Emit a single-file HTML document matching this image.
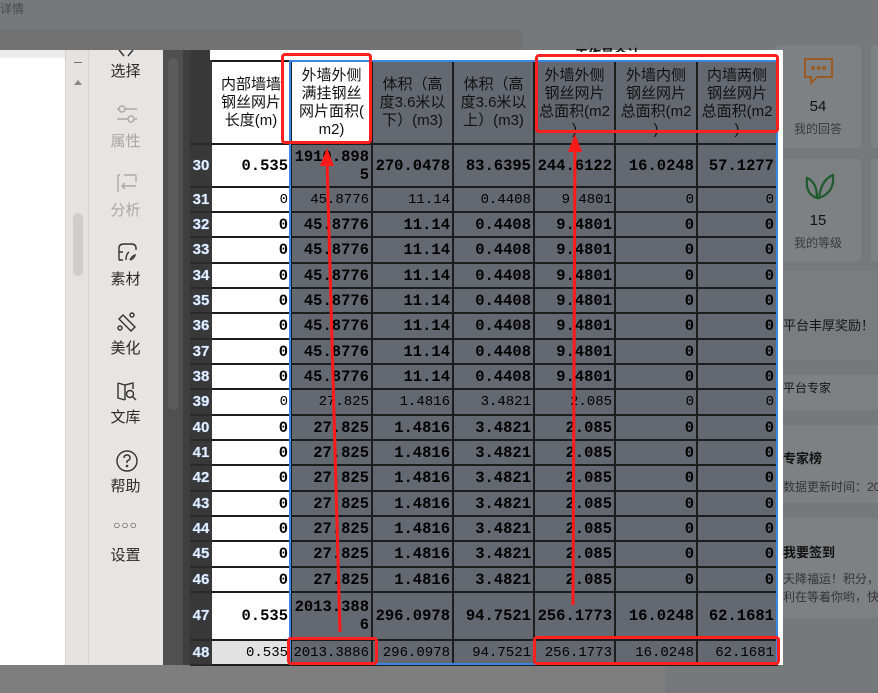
<!DOCTYPE html>
<html><head><meta charset="utf-8"><style>
*{margin:0;padding:0;box-sizing:border-box}
body{width:878px;height:693px;overflow:hidden;background:#7e7e7e;position:relative;font-family:"Liberation Sans","Noto Sans CJK SC",sans-serif}
.a{position:absolute;white-space:nowrap}
.sb{position:absolute;left:88px;width:75px;text-align:center;font-size:15px;color:#2a2a2a}
.sb.d{color:#a9a7a5}
table{border-collapse:collapse;table-layout:fixed;position:absolute;left:190px;top:60px}
td{border:2px solid #1d1d1d;background:#646870;text-align:right;padding:0 2px 0 0;font-family:"Liberation Mono","Noto Sans CJK SC",monospace;font-weight:bold;font-size:15.5px;color:#000;overflow:hidden;white-space:nowrap;line-height:18px}
tr.n td{font-weight:normal;font-size:14px}
tr td.rh,tr.n td.rh{background:#383838;border-color:#383838;border-bottom:2px solid #2a2a2a;color:#e8f0ff;text-align:center;font-family:"Liberation Sans",sans-serif;font-weight:bold;font-size:15px;padding:0;text-shadow:0 0 1px #6af}
td.w{background:#fff}
tr.h td{font-family:"Liberation Sans","Noto Sans CJK SC",sans-serif;font-weight:normal;font-size:15px;text-align:center;white-space:normal;line-height:18px;color:#111;padding:0}
td.wr{white-space:normal;line-height:18px}
.rb{position:absolute;border:3px solid #ff2020;border-radius:4px}
</style></head><body>
<div class="a" style="left:0;top:0;width:878px;height:30px;background:#76787a"></div>
<div class="a" style="left:0;top:0;font-size:12px;color:#4a4a4a">详情</div>
<div class="a" style="left:0;top:30px;width:522px;height:20px;background:#727272"></div>
<div class="a" style="left:522px;top:30px;width:356px;height:20px;background:#76787a"></div>
<div class="a" style="left:0;top:50px;width:65px;height:615px;background:#fff"></div>
<div class="a" style="left:0;top:50px;width:65px;height:8px;background:#ececec"></div>
<div class="a" style="left:65px;top:50px;width:23px;height:615px;background:#e5e2e0;border-left:1px solid #d8d5d3"></div>
<div class="a" style="left:74px;top:62px;width:8px;height:1px;background:#777"></div>
<div class="a" style="left:74px;top:80px;width:0;height:0;border-left:4px solid transparent;border-right:4px solid transparent;border-bottom:5px solid #888"></div>
<div class="a" style="left:73px;top:213px;width:10px;height:63px;background:#cfcccb;border-radius:5px"></div>
<div class="a" style="left:88px;top:50px;width:75px;height:615px;background:#e7e4e2;border-left:1px solid #d6d3d1"></div>
<div class="sb" style="top:60px">选择</div>
<svg class="a" style="left:116px;top:50px" width="20" height="8"><path d="M3 0 L8 6 M17 0 L12 6" stroke="#333" stroke-width="1.5"/></svg>
<svg class="a" style="left:115px;top:104px" width="24" height="22" fill="none" stroke="#aaa" stroke-width="1.4"><circle cx="7" cy="5" r="3"/><path d="M10 5H22M2 5H4"/><circle cx="16" cy="15" r="3"/><path d="M2 15H13M19 15H22"/></svg>
<div class="sb d" style="top:130px">属性</div>
<svg class="a" style="left:116px;top:172px" width="22" height="22" fill="none" stroke="#aaa" stroke-width="1.4"><path d="M2 3V20M2 3H4M20 3V10M8 3H20M6 14H20M9 11L6 14L9 17"/></svg>
<div class="sb d" style="top:199px">分析</div>
<svg class="a" style="left:115px;top:242px" width="24" height="22" fill="none" stroke="#333" stroke-width="1.4"><path d="M4 18V6Q4 2 9 2H16Q21 2 21 6V8M4 18H8M4 10H8"/><path d="M11 18Q11 12 14 10M15 18Q17 14 20 13Q19 17 15 18"/></svg>
<div class="sb" style="top:268px">素材</div>
<svg class="a" style="left:115px;top:311px" width="24" height="22" fill="none" stroke="#333" stroke-width="1.4"><path d="M4 8L16 20L20 16L8 4Z"/><circle cx="17" cy="4" r="2"/><circle cx="5" cy="17" r="2"/></svg>
<div class="sb" style="top:337px">美化</div>
<svg class="a" style="left:115px;top:380px" width="24" height="22" fill="none" stroke="#333" stroke-width="1.4"><path d="M3 3L10 5L18 3V9M3 3V18L10 20M10 5V20"/><circle cx="15" cy="14" r="3.5"/><path d="M17.5 16.5L21 20"/></svg>
<div class="sb" style="top:406px">文库</div>
<svg class="a" style="left:115px;top:449px" width="24" height="24" fill="none" stroke="#333" stroke-width="1.4"><circle cx="12" cy="12" r="10"/><path d="M9 9Q9 6 12 6Q15 6 15 9Q15 11 12 12V14"/><circle cx="12" cy="17" r=".6" fill="#333"/></svg>
<div class="sb" style="top:475px">帮助</div>
<div class="sb" style="top:518px;font-size:12px;letter-spacing:1px;color:#444">○○○</div>
<div class="sb" style="top:544px">设置</div>
<div class="a" style="left:163px;top:50px;width:20px;height:615px;background:#505050"></div>
<div class="a" style="left:168px;top:58px;width:10px;height:352px;background:#5c5c5c;border-radius:5px"></div>
<div class="a" style="left:183px;top:50px;width:7px;height:615px;background:#3f3f3f"></div>
<div class="a" style="left:190px;top:50px;width:20px;height:615px;background:#383838"></div>
<div class="a" style="left:665px;top:50px;width:213px;height:643px;background:#76797c"></div>
<div class="a" style="left:775px;top:45px;width:86px;height:103px;background:#7e8184;border-radius:4px"></div>
<div class="a" style="left:871px;top:45px;width:20px;height:103px;background:#7e8184"></div>
<div class="a" style="left:775px;top:159px;width:86px;height:103px;background:#7e8184;border-radius:4px"></div>
<div class="a" style="left:871px;top:159px;width:20px;height:103px;background:#7e8184"></div>
<svg class="a" style="left:803px;top:57px" width="32" height="30" fill="none" stroke="#9a5a24" stroke-width="2"><path d="M2 2H29V20H14L8 26V20H2Z"/><circle cx="10" cy="11" r="1" fill="#9a5a24"/><circle cx="15.5" cy="11" r="1" fill="#9a5a24"/><circle cx="21" cy="11" r="1" fill="#9a5a24"/></svg>
<div class="a" style="left:775px;width:86px;top:98px;text-align:center;font-size:15px;color:#111">54</div>
<div class="a" style="left:775px;width:86px;top:120px;text-align:center;font-size:12px;color:#3a3a3a">我的回答</div>
<svg class="a" style="left:803px;top:170px" width="32" height="32" fill="none" stroke="#1e5a2e" stroke-width="2.2"><path d="M14 28Q2 24 4 8Q14 12 14 28Z"/><path d="M16 28Q18 10 30 5Q32 22 16 28Z"/></svg>
<div class="a" style="left:775px;width:86px;top:212px;text-align:center;font-size:15px;color:#111">15</div>
<div class="a" style="left:775px;width:86px;top:234px;text-align:center;font-size:12px;color:#3a3a3a">我的等级</div>
<div class="a" style="left:665px;top:270px;width:213px;height:90px;background:#7a7d80"></div>
<div class="a" style="left:783px;top:315px;font-size:13px;color:#151515">平台丰厚奖励！</div>
<div class="a" style="left:665px;top:375px;width:213px;height:35px;background:#7e8184"></div>
<div class="a" style="left:783px;top:379px;font-size:12px;color:#151515">平台专家</div>
<div class="a" style="left:665px;top:425px;width:213px;height:78px;background:#7e8184"></div>
<div class="a" style="left:783px;top:448px;font-size:13px;font-weight:bold;color:#111">专家榜</div>
<div class="a" style="left:783px;top:478px;font-size:12px;color:#333">数据更新时间：20</div>
<div class="a" style="left:665px;top:518px;width:213px;height:100px;background:#7e8184"></div>
<div class="a" style="left:783px;top:542px;font-size:13px;font-weight:bold;color:#111">我要签到</div>
<div class="a" style="left:783px;top:570px;font-size:12px;color:#333">天降福运！积分，</div>
<div class="a" style="left:783px;top:588px;font-size:12px;color:#333">利在等着你哟，快</div>
<div class="a" style="left:210px;top:50px;width:573px;height:615px;background:#fff"></div>
<div class="a" style="left:575px;top:44px;font-size:13px;font-weight:bold;color:#111;height:8px;overflow:hidden">工作量合计</div>
<table>
<colgroup><col style="width:20px"><col style="width:80px"><col style="width:81px"><col style="width:81px"><col style="width:81px"><col style="width:81px"><col style="width:82px"><col style="width:80px"></colgroup>
<tr class="h" style="height:83px"><td class="rh"></td><td class="w">内部墙墙<br>钢丝网片<br>长度(m)</td><td class="w">外墙外侧<br>满挂钢丝<br>网片面积(<br>m2)</td><td>体积（高<br>度3.6米以<br>下）(m3)</td><td>体积（高<br>度3.6米以<br>上）(m3)</td><td>外墙外侧<br>钢丝网片<br>总面积(m2<br>)</td><td>外墙内侧<br>钢丝网片<br>总面积(m2<br>)</td><td>内墙两侧<br>钢丝网片<br>总面积(m2<br>)</td></tr>
<tr style="height:43px"><td class="rh">30</td><td class="w">0.535</td><td class="wr">1910.898<br>5</td><td>270.0478</td><td>83.6395</td><td>244.6122</td><td>16.0248</td><td>57.1277</td></tr>
<tr class="n" style="height:25px"><td class="rh">31</td><td class="w">0</td><td>45.8776</td><td>11.14</td><td>0.4408</td><td>9.4801</td><td>0</td><td>0</td></tr>
<tr style="height:25px"><td class="rh">32</td><td class="w">0</td><td>45.8776</td><td>11.14</td><td>0.4408</td><td>9.4801</td><td>0</td><td>0</td></tr>
<tr style="height:26px"><td class="rh">33</td><td class="w">0</td><td>45.8776</td><td>11.14</td><td>0.4408</td><td>9.4801</td><td>0</td><td>0</td></tr>
<tr style="height:25px"><td class="rh">34</td><td class="w">0</td><td>45.8776</td><td>11.14</td><td>0.4408</td><td>9.4801</td><td>0</td><td>0</td></tr>
<tr style="height:25px"><td class="rh">35</td><td class="w">0</td><td>45.8776</td><td>11.14</td><td>0.4408</td><td>9.4801</td><td>0</td><td>0</td></tr>
<tr style="height:26px"><td class="rh">36</td><td class="w">0</td><td>45.8776</td><td>11.14</td><td>0.4408</td><td>9.4801</td><td>0</td><td>0</td></tr>
<tr style="height:25px"><td class="rh">37</td><td class="w">0</td><td>45.8776</td><td>11.14</td><td>0.4408</td><td>9.4801</td><td>0</td><td>0</td></tr>
<tr style="height:25px"><td class="rh">38</td><td class="w">0</td><td>45.8776</td><td>11.14</td><td>0.4408</td><td>9.4801</td><td>0</td><td>0</td></tr>
<tr class="n" style="height:26px"><td class="rh">39</td><td class="w">0</td><td>27.825</td><td>1.4816</td><td>3.4821</td><td>2.085</td><td>0</td><td>0</td></tr>
<tr style="height:25px"><td class="rh">40</td><td class="w">0</td><td>27.825</td><td>1.4816</td><td>3.4821</td><td>2.085</td><td>0</td><td>0</td></tr>
<tr style="height:25px"><td class="rh">41</td><td class="w">0</td><td>27.825</td><td>1.4816</td><td>3.4821</td><td>2.085</td><td>0</td><td>0</td></tr>
<tr style="height:26px"><td class="rh">42</td><td class="w">0</td><td>27.825</td><td>1.4816</td><td>3.4821</td><td>2.085</td><td>0</td><td>0</td></tr>
<tr style="height:25px"><td class="rh">43</td><td class="w">0</td><td>27.825</td><td>1.4816</td><td>3.4821</td><td>2.085</td><td>0</td><td>0</td></tr>
<tr style="height:25px"><td class="rh">44</td><td class="w">0</td><td>27.825</td><td>1.4816</td><td>3.4821</td><td>2.085</td><td>0</td><td>0</td></tr>
<tr style="height:26px"><td class="rh">45</td><td class="w">0</td><td>27.825</td><td>1.4816</td><td>3.4821</td><td>2.085</td><td>0</td><td>0</td></tr>
<tr style="height:25px"><td class="rh">46</td><td class="w">0</td><td>27.825</td><td>1.4816</td><td>3.4821</td><td>2.085</td><td>0</td><td>0</td></tr>
<tr style="height:48px"><td class="rh">47</td><td class="w">0.535</td><td class="wr">2013.388<br>6</td><td>296.0978</td><td>94.7521</td><td>256.1773</td><td>16.0248</td><td>62.1681</td></tr>
<tr class="n" style="height:25px"><td class="rh">48</td><td style="background:#e2e2e2">0.535</td><td>2013.3886</td><td>296.0978</td><td>94.7521</td><td>256.1773</td><td>16.0248</td><td>62.1681</td></tr>
</table>
<div class="a" style="left:289px;top:60px;width:489px;height:605px;border:2px solid #3a86e6"></div>
<div class="rb" style="left:281px;top:53px;width:91px;height:91px"></div>
<div class="rb" style="left:535px;top:54px;width:244px;height:79px"></div>
<div class="rb" style="left:287px;top:637px;width:91px;height:28px"></div>
<div class="rb" style="left:533px;top:636px;width:247px;height:29px"></div>
<svg class="a" style="left:0;top:0" width="878" height="693"><g stroke="#ff1a1a" stroke-width="3" fill="#ff1a1a"><path d="M340 632L327 160"/><path d="M327 148L320 166L334 166Z" stroke="none"/><path d="M573 605L575 146"/><path d="M575 134L568 152L582 152Z" stroke="none"/></g></svg>
</body></html>
